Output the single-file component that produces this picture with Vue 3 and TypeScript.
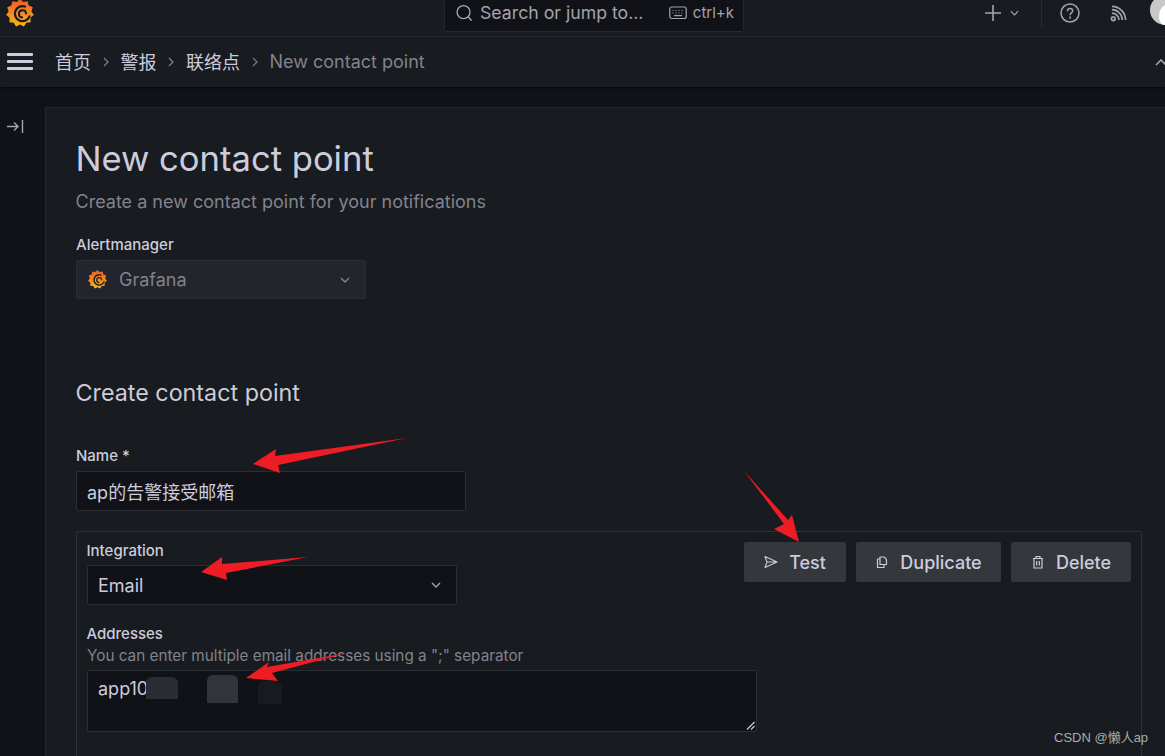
<script setup lang="ts">
const crumbs = ['首页', '警报', '联络点']

// gear-like outline for the logo, 11 teeth
function logoOutline(): string {
  const pts: string[] = []
  const n = 11
  for (let i = 0; i < n * 2; i++) {
    const r = i % 2 === 0 ? 50 : 41
    const a = (Math.PI * i) / n - Math.PI / 2
    pts.push(`${(50 + r * Math.cos(a)).toFixed(1)},${(50 + r * Math.sin(a)).toFixed(1)}`)
  }
  return pts.join(' ')
}
const logoPoints = logoOutline()

const arrows = [
  '407,438 275,456 276,449 253,464 280,473 278,465',
  '308,557 222,564 222,557 201,572 227,580 226,573',
  '744,471 784,524 774,529 799,542 792,515 788,520',
  '347,653 267,667 269,662 246,678 278,681 272,673'
]
</script>

<template>
  <div class="page">
    <header class="topbar">
      <svg class="logo" viewBox="0 0 100 100">
        <defs>
          <linearGradient id="logoFill" x1="0" y1="0" x2="0" y2="1">
            <stop offset="0" stop-color="#f05a28" />
            <stop offset="1" stop-color="#fbb516" />
          </linearGradient>
        </defs>
        <polygon :points="logoPoints" fill="url(#logoFill)" />
        <path d="M68 27A27 27 0 1 0 84 62" fill="none" stroke="#181b1f" stroke-width="8" stroke-linecap="round" />
        <path d="M72 52A13 13 0 1 0 58 66" fill="none" stroke="#181b1f" stroke-width="7" stroke-linecap="round" />
      </svg>
      <div class="search">
        <svg class="search-icon" viewBox="0 0 20 20" fill="none" stroke="#a3a4ae" stroke-width="1.5" stroke-linecap="round">
          <circle cx="9.5" cy="9" r="7.2" />
          <path d="M14.8 14.2 18 18" />
        </svg>
        <span class="search-text">Search or jump to...</span>
        <svg class="kbd-icon" viewBox="0 0 18 14" fill="none" stroke="#a3a4ae" stroke-width="1.2">
          <rect x="0.8" y="1" width="16.4" height="11.5" rx="2" />
          <path d="M3.5 4.5h1M6.5 4.5h1M9.5 4.5h1M12.5 4.5h1M3.5 7h1M6.5 7h1M9.5 7h1M12.5 7h1M5 9.7h8" />
        </svg>
        <span class="search-key">ctrl+k</span>
      </div>
      <div class="top-actions">
        <svg class="plus" viewBox="0 0 16 16" stroke="#a3a4ae" stroke-width="1.6"><path d="M8 0v16M0 8h16" /></svg>
        <svg class="plus-chevron" viewBox="0 0 10 6" fill="none" stroke="#a3a4ae" stroke-width="1.3"><path d="m1 1 4 4 4-4" /></svg>
        <span class="top-divider"></span>
        <svg class="help" viewBox="0 0 20 20" fill="none" stroke="#a3a4ae" stroke-width="1.5">
          <circle cx="10" cy="10" r="9" />
          <path d="M7.5 7.8c0-3.2 5.2-3.2 5.2 0 0 2-2.6 2-2.6 4" stroke-linecap="round" />
          <path d="M10.1 14v1.2" stroke-linecap="round" />
        </svg>
        <svg class="rss" viewBox="0 0 18 18" fill="none" stroke="#a3a4ae" stroke-width="1.8">
          <circle cx="3.5" cy="14.5" r="2" />
          <path d="M2 8.500a7.500 7.500 0 0 1 7.500 7.500M2 5a11 11 0 0 1 11 11M2 1.500A14.500 14.500 0 0 1 16.500 16" />
        </svg>
        <span class="avatar"><span class="avatar-body"></span></span>
      </div>
    </header>

    <nav class="navbar">
      <span class="burger"><i></i><i></i><i></i></span>
      <template v-for="crumb in crumbs" :key="crumb">
        <span class="crumb">{{ crumb }}</span>
        <svg class="crumb-sep" viewBox="0 0 6 10" fill="none" stroke="#82838e" stroke-width="1.2"><path d="m1 1 4 4-4 4" /></svg>
      </template>
      <span class="crumb current">New contact point</span>
      <svg class="collapse" viewBox="0 0 12 7" fill="none" stroke="#a3a4ae" stroke-width="1.6"><path d="m1 6 5-5 5 5" /></svg>
    </nav>

    <main class="body">
      <aside class="rail">
        <svg class="rail-icon" viewBox="0 0 17 13" fill="none" stroke="#a3a4ae" stroke-width="1.4">
          <path d="M0 6.500h11M7 2.500l4 4-4 4M15.500 0v13" />
        </svg>
      </aside>
      <section class="card">
        <h1>New contact point</h1>
        <p class="subtitle">Create a new contact point for your notifications</p>

        <label class="label am-label">Alertmanager</label>
        <div class="am-select">
          <svg class="am-logo" viewBox="0 0 100 100">
            <polygon :points="logoPoints" fill="url(#logoFill)" />
            <path d="M68 27A27 27 0 1 0 84 62" fill="none" stroke="#22252b" stroke-width="8" stroke-linecap="round" />
            <path d="M72 52A13 13 0 1 0 58 66" fill="none" stroke="#22252b" stroke-width="7" stroke-linecap="round" />
          </svg>
          <span class="am-value">Grafana</span>
          <svg class="chevron" viewBox="0 0 10 6" fill="none" stroke="#82838e" stroke-width="1.4"><path d="m1 1 4 4 4-4" /></svg>
        </div>

        <h2>Create contact point</h2>

        <label class="label name-label">Name *</label>
        <div class="name-input">ap的告警接受邮箱</div>

        <div class="integration">
          <div class="integration-top">
            <div>
              <label class="label inner-label">Integration</label>
              <div class="type-select">
                <span>Email</span>
                <svg class="chevron" viewBox="0 0 10 6" fill="none" stroke="#a3a4ae" stroke-width="1.4"><path d="m1 1 4 4 4-4" /></svg>
              </div>
            </div>
            <div class="buttons">
              <button class="btn test">
                <svg viewBox="0 0 14 14" fill="none" stroke="#ccccdc" stroke-width="1.100" stroke-linejoin="round"><path d="M1 1.500 13 7 1 12.500 3 7ZM3 7h10" /></svg>
                Test
              </button>
              <button class="btn dup">
                <svg viewBox="0 0 14 14" fill="none" stroke="#ccccdc" stroke-width="1.200" stroke-linejoin="round"><path d="M5 2h3.500a4 4 0 0 1 3 3.500V9.500H5ZM5 4H2.500v8.500H9v-3" /></svg>
                Duplicate
              </button>
              <button class="btn del">
                <svg viewBox="0 0 14 14" fill="none" stroke="#ccccdc" stroke-width="1.200"><path d="M2 3.500h10M5 3.500V1.500h4v2M3 3.500v9.500h8V3.500M5.700 6v4.500M8.300 6v4.500" /></svg>
                Delete
              </button>
            </div>
          </div>

          <label class="label inner-label addr-label">Addresses</label>
          <div class="hint">You can enter multiple email addresses using a ";" separator</div>
          <div class="addr-input">
            <span>app10</span>
            <i class="smudge s1"></i>
            <i class="smudge s2"></i>
            <i class="smudge s3"></i>
            <svg class="grip" viewBox="0 0 9 9" stroke="#ccccdc" stroke-width="1.200"><path d="M8.500 1 1 8.500M8.500 5 5 8.500" /></svg>
          </div>
        </div>
      </section>
    </main>

    <svg class="arrows" viewBox="0 0 1165 756">
      <polygon v-for="pts in arrows" :key="pts" :points="pts" fill="#ee1c25" />
    </svg>
    <div class="watermark">CSDN @懒人ap</div>
  </div>
</template>

<style scoped>
.page {
  position: relative;
  height: 756px;
  overflow: hidden;
  background: #111217;
  color: #ccccdc;
  font-family: Inter, "Noto Sans CJK SC", sans-serif;
}

.topbar {
  height: 37px;
  box-sizing: border-box;
  display: flex;
  align-items: flex-start;
  background: #181b1f;
  border-bottom: 1px solid #25282c;
  overflow: hidden;
}

.logo {
  width: 28px;
  height: 28px;
  margin: -1px 0 0 6px;
  flex: none;
}

.search {
  width: 300px;
  height: 33px;
  box-sizing: border-box;
  margin-left: 410px;
  margin-top: -1px;
  padding: 0 9px 0 10px;
  display: flex;
  align-items: center;
  background: #111217;
  border: 1px solid #25282c;
  border-radius: 2px;
  flex: none;
}

.search-icon {
  width: 18px;
  height: 18px;
  margin-top: -6px;
  flex: none;
}

.search-text {
  margin: -6px 0 0 7px;
  font-size: 17.700px;
  color: #a3a4ae;
  white-space: nowrap;
  flex: 1;
}

.kbd-icon {
  width: 18px;
  height: 14px;
  margin-top: -6px;
  flex: none;
}

.search-key {
  margin: -6px 0 0 6px;
  font-size: 15px;
  color: #a3a4ae;
}

.top-actions {
  margin-left: 241px;
  display: flex;
  align-items: center;
  height: 26px;
  flex: none;
}

.plus {
  width: 16px;
  height: 16px;
}

.plus-chevron {
  width: 9px;
  height: 6px;
  margin-left: 9px;
}

.top-divider {
  width: 1px;
  height: 27px;
  background: #25282c;
  margin-left: 22px;
}

.help {
  width: 20px;
  height: 20px;
  margin-left: 18px;
}

.rss {
  width: 17px;
  height: 17px;
  margin-left: 30px;
}

.avatar {
  width: 30px;
  height: 30px;
  margin: -6px 0 0 23px;
  border-radius: 50%;
  background: #c9c9c9;
  overflow: hidden;
  position: relative;
  flex: none;
}

.avatar-body {
  position: absolute;
  left: 9px;
  top: 8px;
  width: 26px;
  height: 26px;
  border-radius: 50%;
  background: #fff;
}

.navbar {
  height: 50px;
  box-sizing: border-box;
  display: flex;
  align-items: center;
  background: #181b1f;
  padding: 0 0 2px 7px;
  box-shadow: 0 1px 2px rgba(0, 0, 0, 0.6);
  position: relative;
}

.burger {
  width: 26px;
  display: flex;
  flex-direction: column;
  gap: 4px;
  margin-right: 22px;
  flex: none;
}

.burger i {
  display: block;
  height: 3px;
  border-radius: 1px;
  background: #ccccdc;
}

.crumb {
  font-size: 18px;
  white-space: nowrap;
}

.crumb.current {
  color: #82838e;
}

.crumb-sep {
  width: 6px;
  height: 10px;
  margin: 2px 12px 0 11.500px;
  flex: none;
}

.collapse {
  position: absolute;
  right: -2px;
  top: 22px;
  width: 12px;
  height: 7px;
}

.body {
  display: flex;
  padding-top: 20px;
}

.rail {
  width: 45px;
  padding-top: 13px;
  box-sizing: border-box;
  flex: none;
}

.rail-icon {
  display: block;
  width: 17px;
  height: 13px;
  margin-left: 7px;
}

.card {
  flex: 1;
  height: 700px;
  padding: 28px 24px 0 30px;
  background: #181b1f;
  border: 1px solid #25282c;
  border-radius: 2px;
}

h1 {
  margin: 0 0 0 -0.500px;
  font-size: 34.600px;
  line-height: 44px;
  font-weight: 400;
}

.subtitle {
  margin: 10px 0 0 -0.500px;
  font-size: 18px;
  line-height: 24px;
  color: #82838e;
}

.label {
  display: block;
  font-size: 15px;
  line-height: 18px;
  font-weight: 500;
}

.inner-label {
  margin-left: -0.500px;
}

.am-label {
  margin-top: 22px;
}

.am-select {
  width: 290px;
  height: 39px;
  box-sizing: border-box;
  margin-top: 6px;
  padding: 0 15px 0 11px;
  display: flex;
  align-items: center;
  background: #22252b;
  border: 1px solid #2a2d31;
  border-radius: 2px;
}

.am-logo {
  width: 19px;
  height: 19px;
  flex: none;
}

.am-value {
  flex: 1;
  margin-left: 12px;
  font-size: 18px;
  color: #82838e;
}

.chevron {
  width: 10px;
  height: 6px;
  flex: none;
}

h2 {
  margin: 78px 0 0 -0.500px;
  font-size: 23.300px;
  line-height: 32px;
  font-weight: 400;
}

.name-label {
  margin-top: 38px;
}

.name-input {
  width: 390px;
  height: 40px;
  box-sizing: border-box;
  margin-top: 6px;
  padding: 0 10px 1px;
  display: flex;
  align-items: center;
  background: #111217;
  border: 1px solid #2a2d31;
  border-radius: 2px;
  font-size: 18px;
}

.integration {
  width: 1066px;
  height: 300px;
  box-sizing: border-box;
  margin-top: 20px;
  padding: 10px;
  border: 1px solid #2f3237;
  border-radius: 2px;
}

.integration-top {
  display: flex;
  justify-content: space-between;
}

.type-select {
  width: 370px;
  height: 40px;
  box-sizing: border-box;
  margin-top: 5px;
  padding: 0 15px 0 10px;
  display: flex;
  align-items: center;
  justify-content: space-between;
  background: #111217;
  border: 1px solid #2a2d31;
  border-radius: 2px;
  font-size: 18px;
}

.buttons {
  display: flex;
  gap: 10px;
}

.btn {
  height: 40px;
  padding: 0;
  display: flex;
  align-items: center;
  justify-content: center;
  gap: 11px;
  background: #34373c;
  border: none;
  border-radius: 2px;
  color: #ccccdc;
  font-family: inherit;
  font-size: 18px;
  font-weight: 500;
}

.btn svg {
  width: 14px;
  height: 14px;
}

.test {
  width: 102px;
}

.dup {
  width: 145px;
}

.del {
  width: 120px;
}

.addr-label {
  margin-top: 20px;
}

.hint {
  margin-top: 4px;
  font-size: 15.300px;
  line-height: 18px;
  color: #82838e;
}

.addr-input {
  position: relative;
  width: 670px;
  height: 62px;
  box-sizing: border-box;
  margin-top: 5px;
  padding: 6px 10px;
  background: #111217;
  border: 1px solid #2a2d31;
  border-radius: 2px;
  font-size: 18px;
  line-height: 24px;
}

.smudge {
  position: absolute;
  display: block;
  border-radius: 6px 6px 0 0;
}

.s1 {
  left: 58px;
  top: 6px;
  width: 32px;
  height: 22px;
  background: #2b2c33;
}

.s2 {
  left: 119px;
  top: 4px;
  width: 31px;
  height: 28px;
  background: #333439;
}

.s3 {
  left: 170px;
  top: 10px;
  width: 24px;
  height: 23px;
  background: #191a1f;
}

.grip {
  position: absolute;
  right: 1px;
  bottom: 1px;
  width: 9px;
  height: 9px;
}

.arrows {
  position: absolute;
  left: 0;
  top: 0;
  width: 1165px;
  height: 756px;
  pointer-events: none;
}

.watermark {
  position: absolute;
  left: 1054px;
  top: 730px;
  font-family: "Liberation Sans", "Noto Sans CJK SC", sans-serif;
  font-size: 13px;
  line-height: 16px;
  color: #a9aaac;
}
</style>
